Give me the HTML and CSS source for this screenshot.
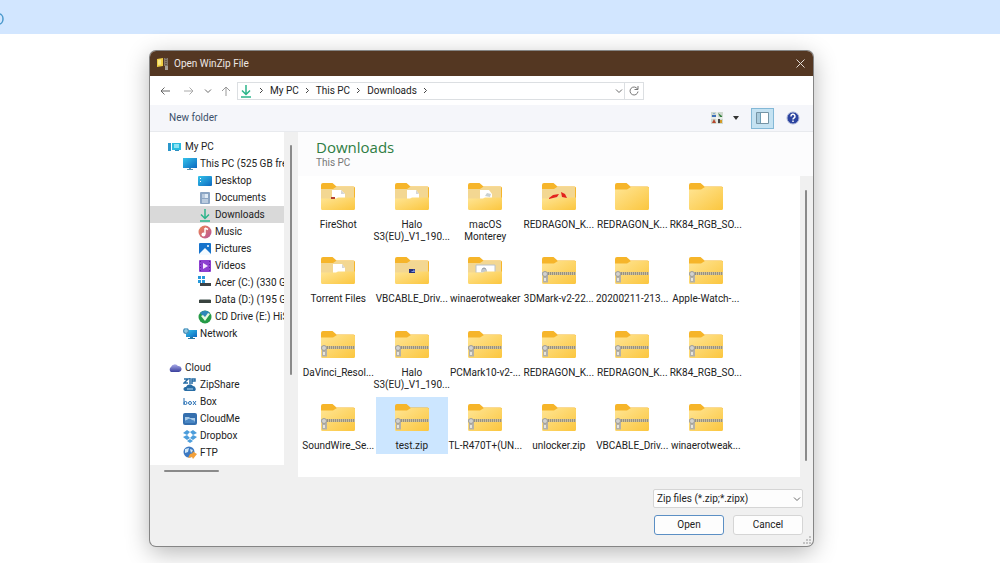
FILE: index.html
```html
<!DOCTYPE html>
<html lang="en">
<head>
    <meta charset="utf-8">
    <title>Open WinZip File</title>
    <link rel="stylesheet" href="styles.css">
</head>
<body>
    <!-- Shared icons -->
    <svg class="defs">
        <defs>
            <linearGradient id="gFront" x1="0" y1="0" x2="1" y2="1">
                <stop offset="0" stop-color="#ffe594"/>
                <stop offset="1" stop-color="#fbc63f"/>
            </linearGradient>
            <linearGradient id="gBlue" x1="0" y1="0" x2="1" y2="1">
                <stop offset="0" stop-color="#35c3ea"/>
                <stop offset="1" stop-color="#0b68c0"/>
            </linearGradient>
            <linearGradient id="gMusic" x1="0" y1="0" x2="1" y2="1">
                <stop offset="0" stop-color="#ee8650"/>
                <stop offset="1" stop-color="#b7539c"/>
            </linearGradient>
            <linearGradient id="gCloud" x1="0" y1="0" x2="0" y2="1">
                <stop offset="0" stop-color="#a9abe8"/>
                <stop offset="1" stop-color="#3a3f9c"/>
            </linearGradient>
        </defs>
        <symbol id="folder-back" viewBox="0 0 34 27">
            <path d="M0 2a2 2 0 0 1 2-2h9.500l4 3.500H32.500A1.500 1.500 0 0 1 34 5v12H0z" fill="#f6b52a"/>
            <path d="M0 6h12l3-2h18v14H0z" fill="#f3d792"/>
        </symbol>
        <symbol id="folder-front" viewBox="0 0 34 27">
            <path d="M0 15.500h15l2-1H34V25.500a1.500 1.500 0 0 1-1.500 1.500h-31A1.500 1.500 0 0 1 0 25.500z" fill="url(#gFront)"/>
        </symbol>
        <symbol id="folder" viewBox="0 0 34 27">
            <path d="M0 2a2 2 0 0 1 2-2h9.500l4 3.500H32.500A1.500 1.500 0 0 1 34 5v12H0z" fill="#f6b52a"/>
            <path d="M0 6.500h12l4-2.500h16.500A1.500 1.500 0 0 1 34 5.500v20a1.500 1.500 0 0 1-1.500 1.500h-31A1.500 1.500 0 0 1 0 25.500z" fill="url(#gFront)"/>
        </symbol>
        <symbol id="folder-doc" viewBox="0 0 34 27">
            <use href="#folder-back"/>
            <path d="M12 7h9l3 4v6H12z" fill="#fff"/>
            <path d="M21 7v4h3z" fill="#d6d6d6"/>
            <use href="#folder-front"/>
        </symbol>
        <symbol id="folder-fire" viewBox="0 0 34 27">
            <use href="#folder-back"/>
            <path d="M11 7h9l4 4v6H11z" fill="#fff"/>
            <path d="M20 7v4h4z" fill="#d6d6d6"/>
            <use href="#folder-front"/>
            <path d="M10 14h4v2h-4z" fill="#b5412f"/>
        </symbol>
        <symbol id="folder-mac" viewBox="0 0 34 27">
            <use href="#folder-back"/>
            <path d="M12 7h9l3 4v6H12z" fill="#fff"/>
            <path d="M17 13l2-3 4 1-1 3z" fill="#c9d1d2"/>
            <use href="#folder-front"/>
        </symbol>
        <symbol id="folder-cable" viewBox="0 0 34 27">
            <use href="#folder-back"/>
            <use href="#folder-front"/>
            <path d="M14 12h6v4h-6z" fill="#262f7c"/>
            <path d="M16 14h2l1-2 1 3h-3z" fill="#7c93dd"/>
        </symbol>
        <symbol id="folder-tweak" viewBox="0 0 34 27">
            <use href="#folder-back"/>
            <path d="M8 8h19v8H8z" fill="#fff" stroke="#b9c2cb"/>
            <path d="M14 15v-2a2 2 0 0 1 4 0v2M16 11v4" stroke="#8b949e" fill="none"/>
            <use href="#folder-front"/>
        </symbol>
        <symbol id="folder-red" viewBox="0 0 34 27">
            <use href="#folder-back"/>
            <use href="#folder-front"/>
            <path d="M7 15l4-3 6-1-2 3-4 1-4 1zM19 9l4 2 2 4-5-1z" fill="#e3231d"/>
        </symbol>
        <symbol id="zip" viewBox="0 0 34 27">
            <use href="#folder"/>
            <path d="M0 15h34v3H0z" fill="#cbbf9c"/>
            <path d="M6 16.500h28" stroke="#98917f" stroke-width="3" stroke-dasharray="1 1"/>
            <path d="M1 15h5v10.500H1z" fill="#b3b0a8"/>
            <circle cx="3" cy="17" r="2.500" fill="#d2d2d0" stroke="#a19e96"/>
            <path d="M3 21v3" stroke="#e7e5dd" stroke-width="2"/>
        </symbol>
        <symbol id="download" viewBox="0 0 14 14">
            <path d="M7 1v9M3 6.500l4 4 4-4M2 13h10" fill="none" stroke="#2bb58a" stroke-width="1.500"/>
        </symbol>
        <symbol id="chev-down" viewBox="0 0 8 8">
            <path d="M1 2.500l3 3 3-3" fill="none" stroke="#6b6b6b"/>
        </symbol>
    </svg>

    <div class="page-bar">
        <svg class="page-logo" viewBox="0 0 4 14"><path d="M-2 2h1a4 5 0 0 1 0 10h-1" fill="none" stroke="#4a98cb" stroke-width="1.500"/></svg>
    </div>

    <main class="desktop">
        <div class="dialog" role="dialog" aria-labelledby="dlgTitle">
            <header class="titlebar">
                <svg class="app-icon" viewBox="0 0 12 12">
                    <path d="M0 1l6-1v8l-6 1z" fill="#f0cf45"/>
                    <path d="M1 2l3-.5v5l-3 .5z" fill="#f9e788"/>
                    <path d="M7 0h4v8H7z" fill="#85786d"/>
                    <path d="M9 0v8" stroke="#403630" stroke-dasharray="1 1"/>
                    <path d="M8 8h3v4H8z" fill="#a5a09b"/>
                </svg>
                <h1 class="title" id="dlgTitle">Open WinZip File</h1>
                <button class="close" aria-label="Close">
                    <svg viewBox="0 0 9 9"><path d="M.5.5l8 8M8.500.5l-8 8" stroke="#e3dcd6"/></svg>
                </button>
            </header>

            <nav class="navbar">
                <button class="nav-btn back" aria-label="Back"><svg viewBox="0 0 10 10"><path d="M10 5H1M4.500 1.500L1 5l3.500 3.500" fill="none" stroke="#666"/></svg></button>
                <button class="nav-btn fwd" aria-label="Forward"><svg viewBox="0 0 10 10"><path d="M0 5h9M5.500 1.500L9 5 5.500 8.500" fill="none" stroke="#aaa"/></svg></button>
                <button class="nav-btn recent" aria-label="Recent locations"><svg viewBox="0 0 8 8"><use href="#chev-down"/></svg></button>
                <button class="nav-btn up" aria-label="Up"><svg viewBox="0 0 10 10"><path d="M5 10V1M1 5l4-4 4 4" fill="none" stroke="#999"/></svg></button>
                <div class="address">
                    <svg class="place"><use href="#download"/></svg>
                    <svg class="sep" viewBox="0 0 5 7"><path d="M1 1l2.500 2.500L1 6" fill="none" stroke="#444"/></svg>
                    <a href="#">My PC</a>
                    <svg class="sep" viewBox="0 0 5 7"><path d="M1 1l2.500 2.500L1 6" fill="none" stroke="#444"/></svg>
                    <a href="#">This PC</a>
                    <svg class="sep" viewBox="0 0 5 7"><path d="M1 1l2.500 2.500L1 6" fill="none" stroke="#444"/></svg>
                    <a href="#">Downloads</a>
                    <svg class="sep" viewBox="0 0 5 7"><path d="M1 1l2.500 2.500L1 6" fill="none" stroke="#444"/></svg>
                    <button class="drop" aria-label="Previous locations"><svg viewBox="0 0 8 8"><use href="#chev-down"/></svg></button>
                    <button class="refresh" aria-label="Refresh"><svg viewBox="0 0 10 10"><path d="M8.500 3A4 4 0 1 0 9 5.500M9 0v3.500H5.500" fill="none" stroke="#777"/></svg></button>
                </div>
            </nav>

            <div class="toolbar">
                <button class="new-folder">New folder</button>
                <button class="view" aria-label="Change your view">
                    <svg class="view-icon" viewBox="0 0 12 12">
                        <path d="M0 0h12v12H0z" fill="#cfd8cf"/>
                        <path d="M1 3h4v2H1z" fill="#3e6fb7"/><path d="M2 1h2v1H2z" fill="#8dafd0"/>
                        <path d="M7 1l4 3v1H9z" fill="#35803f"/><path d="M1 11l2-4 2 4z" fill="#b8462d"/>
                        <path d="M7 7h2v4H7z" fill="#434343"/><path d="M9 8h2v3H9z" fill="#d59b26"/>
                        <path d="M6 0v12M0 6h12" stroke="#fff"/>
                    </svg>
                    <svg class="caret" viewBox="0 0 6 4"><path d="M0 0h6L3 4z" fill="#333"/></svg>
                </button>
                <button class="pane" aria-label="Preview pane">
                    <svg viewBox="0 0 13 12"><path d="M.5.5h12v11H.5z" fill="#fff" stroke="#7594a5"/><path d="M1 1h3v10H1z" fill="#a9cbdc"/><path d="M4.500 1v10" stroke="#6c9db5"/></svg>
                </button>
                <button class="help" aria-label="Help">
                    <svg viewBox="0 0 14 14"><circle cx="7" cy="7" r="6" fill="#2b439f" stroke="#a7b2d6"/><path d="M5 5.500a2 2 0 1 1 3 1.500q-1 .5-1 1.500M7 9.500v1.500" fill="none" stroke="#fff" stroke-width="1.500"/></svg>
                </button>
            </div>

            <div class="body">
                <aside class="sidebar">
                    <div class="tree">
                        <a class="node" href="#"><svg viewBox="0 0 14 14"><path d="M0 3h3v8H0z" fill="#2a96cb"/><path d="M4 3h9v7H4z" fill="#29bce0"/><path d="M6 4h5v4H6z" fill="#8be2f2"/><path d="M7 10h4v1H7z" fill="#2c8ec0"/></svg>My PC</a>
                        <a class="node l1" href="#"><svg viewBox="0 0 14 14"><path d="M0 1h14v10H0z" fill="url(#gBlue)"/><path d="M6 11h2v1h2v1H4v-1h2z" fill="#5b8fae"/></svg>This PC (525 GB free)</a>
                        <a class="node l2" href="#"><svg viewBox="0 0 14 14"><rect y="2" width="14" height="10" rx="1" fill="url(#gBlue)"/><path d="M2 4h1v1H2zM2 7h1v1H2z" fill="#fff"/></svg>Desktop</a>
                        <a class="node l2" href="#"><svg viewBox="0 0 14 14"><rect x="2" y="1" width="10" height="12" rx="1" fill="#8ba5c4"/><path d="M4 4h3M4 6h3M4 9h6M4 11h6" stroke="#e8f0f8"/><path d="M7 3h3v4H7z" fill="#dfebf6"/></svg>Documents</a>
                        <a class="node l2 current" href="#"><svg><use href="#download"/></svg>Downloads</a>
                        <a class="node l2" href="#"><svg viewBox="0 0 14 14"><circle cx="7" cy="7" r="6.500" fill="url(#gMusic)"/><path d="M7 3v6M7 3l3 1.500" stroke="#fff" stroke-width="1.500"/><circle cx="5.500" cy="9.500" r="2" fill="#fff"/></svg>Music</a>
                        <a class="node l2" href="#"><svg viewBox="0 0 14 14"><rect x="1" y="1" width="12" height="12" rx="1" fill="#1673cc"/><path d="M1 12l6-6 6 6v1H1z" fill="#f4fbff"/><circle cx="10" cy="4" r="1" fill="#fff"/></svg>Pictures</a>
                        <a class="node l2" href="#"><svg viewBox="0 0 14 14"><rect x="1" y="1" width="12" height="12" rx="1" fill="#8d3fd0"/><path d="M2.500 2v10M11.500 2v10" stroke="#5c219b" stroke-dasharray="1 2"/><path d="M5 4l5 3-5 3z" fill="#f6e8ff"/></svg>Videos</a>
                        <a class="node l2" href="#"><svg viewBox="0 0 14 14"><path d="M0 0h3v3H0zM4 0h3v3H4zM0 4h3v3H0zM4 4h3v3H4z" fill="#2799da"/><path d="M2 7h11v3H2z" fill="#3d4245"/></svg>Acer (C:) (330 GB free)</a>
                        <a class="node l2" href="#"><svg viewBox="0 0 14 14"><path d="M2 6h10l1 1H1z" fill="#a1a9a7"/><path d="M1 7h12v3H1z" fill="#39433f"/></svg>Data (D:) (195 GB free)</a>
                        <a class="node l2" href="#"><svg viewBox="0 0 14 14"><circle cx="7" cy="7" r="6.500" fill="#259b46"/><path d="M2 3a6.500 6.500 0 0 1 10 0L7 8z" fill="#2f88b8"/><path d="M3 6l4 5 5-7-2-1-3 4-2-2z" fill="#e4f9df"/></svg>CD Drive (E:) HiSuite</a>
                        <a class="node l1" href="#"><svg viewBox="0 0 14 14"><path d="M3 3h11v7H3z" fill="url(#gBlue)"/><path d="M7 10h3v1h2v1H5v-1h2z" fill="#2778a3"/><circle cx="3" cy="4" r="3" fill="#4f93bd"/><path d="M1 4h4M3 1v5" stroke="#a7dced"/></svg>Network</a>
                        <a class="node root" href="#"><svg viewBox="0 0 14 14"><path d="M3 11a3 3 0 0 1 0-5 4 4 0 0 1 7-1 3 3 0 0 1 1 6z" fill="url(#gCloud)"/></svg>Cloud</a>
                        <a class="node l1" href="#"><svg viewBox="0 0 14 14"><path d="M1 1h4L1 5h4M7 0v6M9 6V1h3v2H9" fill="none" stroke="#286da5" stroke-width="1.500"/><path d="M2 13a2 2 0 0 1 1-4 4 4 0 0 1 7-1 3 3 0 0 1 2 5z" fill="#286da5"/><path d="M4 11h6" stroke="#b9dcf2"/></svg>ZipShare</a>
                        <a class="node l1" href="#"><svg viewBox="0 0 14 14"><path d="M1 3v7" stroke="#2870b5"/><circle cx="2.500" cy="8" r="1.500" fill="none" stroke="#2870b5"/><circle cx="7" cy="8" r="1.500" fill="none" stroke="#2870b5"/><path d="M10 6l3 4M13 6l-3 4" stroke="#2870b5"/></svg>Box</a>
                        <a class="node l1" href="#"><svg viewBox="0 0 14 14"><rect x="0" y="1" width="14" height="12" rx="2" fill="#356fae"/><path d="M2 10V5h4l1 1h5v4z" fill="#a9cbe8"/><path d="M2 11a2 2 0 0 1 2-3 3 3 0 0 1 5 0q3 0 3 3z" fill="#4a87c4"/></svg>CloudMe</a>
                        <a class="node l1" href="#"><svg viewBox="0 0 14 14"><path d="M4 1l3 2-3 3-4-2zM10 1l4 3-4 2-3-3zM0 8l4-2 3 3-3 2zM14 8l-4-2-3 3 3 2zM7 10l3 2-3 2-3-2z" fill="#4c9ddb"/></svg>Dropbox</a>
                        <a class="node l1" href="#"><svg viewBox="0 0 14 14"><circle cx="6" cy="6" r="5.500" fill="#3c79c2"/><path d="M2 3l4-1-1 4-3 1zM7 3l3 1-2 3z" fill="#d2e8f7"/><path d="M14 8l-4 5-1-2-4 1 2-4 3-1-1-2z" fill="#f3a03a"/></svg>FTP</a>
                    </div>
                    <div class="vbar"></div>
                    <div class="hbar"></div>
                </aside>

                <section class="content">
                    <div class="heading">
                        <h2>Downloads</h2>
                        <p>This PC</p>
                    </div>
                    <div class="files">
                        <button class="file"><svg><use href="#folder-fire"/></svg>FireShot</button>
                        <button class="file"><svg><use href="#folder-doc"/></svg>Halo<br>S3(EU)_V1_190...</button>
                        <button class="file"><svg><use href="#folder-mac"/></svg>macOS<br>Monterey</button>
                        <button class="file"><svg><use href="#folder-red"/></svg>REDRAGON_K...</button>
                        <button class="file"><svg><use href="#folder"/></svg>REDRAGON_K...</button>
                        <button class="file"><svg><use href="#folder"/></svg>RK84_RGB_SO...</button>

                        <button class="file"><svg><use href="#folder-doc"/></svg>Torrent Files</button>
                        <button class="file"><svg><use href="#folder-cable"/></svg>VBCABLE_Driv...</button>
                        <button class="file"><svg><use href="#folder-tweak"/></svg>winaerotweaker</button>
                        <button class="file"><svg><use href="#zip"/></svg>3DMark-v2-22...</button>
                        <button class="file"><svg><use href="#zip"/></svg>20200211-213...</button>
                        <button class="file"><svg><use href="#zip"/></svg>Apple-Watch-...</button>

                        <button class="file"><svg><use href="#zip"/></svg>DaVinci_Resol...</button>
                        <button class="file"><svg><use href="#zip"/></svg>Halo<br>S3(EU)_V1_190...</button>
                        <button class="file"><svg><use href="#zip"/></svg>PCMark10-v2-...</button>
                        <button class="file"><svg><use href="#zip"/></svg>REDRAGON_K...</button>
                        <button class="file"><svg><use href="#zip"/></svg>REDRAGON_K...</button>
                        <button class="file"><svg><use href="#zip"/></svg>RK84_RGB_SO...</button>

                        <button class="file"><svg><use href="#zip"/></svg>SoundWire_Se...</button>
                        <button class="file selected"><svg><use href="#zip"/></svg>test.zip</button>
                        <button class="file"><svg><use href="#zip"/></svg>TL-R470T+(UN...</button>
                        <button class="file"><svg><use href="#zip"/></svg>unlocker.zip</button>
                        <button class="file"><svg><use href="#zip"/></svg>VBCABLE_Driv...</button>
                        <button class="file"><svg><use href="#zip"/></svg>winaerotweak...</button>
                    </div>
                    <div class="scroll"><div class="thumb"></div></div>
                </section>
            </div>

            <footer class="footer">
                <div class="type">
                    <select aria-label="File type">
                        <option>Zip files (*.zip;*.zipx)</option>
                    </select>
                    <svg viewBox="0 0 8 8"><use href="#chev-down"/></svg>
                </div>
                <div class="actions">
                    <button class="btn primary">Open</button>
                    <button class="btn">Cancel</button>
                </div>
                <svg class="grip" viewBox="0 0 8 8"><path d="M6 0h2v2H6zM6 3h2v2H6zM3 3h2v2H3zM0 6h2v2H0zM3 6h2v2H3zM6 6h2v2H6z" fill="#c4c4c4"/></svg>
            </footer>
        </div>
    </main>
</body>
</html>
```

FILE: styles.css
```css
* { box-sizing: border-box; }
body {
    margin: 0;
    height: 100vh;
    display: flex;
    flex-direction: column;
    background: #fff;
    color: #222;
    font-family: Roboto, "Open Sans", sans-serif;
    font-size: 10px;
    line-height: 12px;
    overflow: hidden;
}
h1, h2, p { margin: 0; font-weight: normal; }
a { color: inherit; text-decoration: none; }
button, select { font: inherit; color: inherit; }
button {
    margin: 0;
    padding: 0;
    border: none;
    background: none;
    cursor: pointer;
}
svg { display: block; flex: none; }
.defs { position: absolute; width: 0; height: 0; }

.page-bar {
    flex: none;
    height: 34px;
    padding-top: 12px;
    background: #d2e6ff;
}
.page-logo { width: 4px; height: 14px; }

.desktop {
    flex: 1;
    min-height: 0;
    display: flex;
    padding: 17px 187px 17px 150px;
}
.dialog {
    flex: 1;
    min-width: 0;
    display: flex;
    flex-direction: column;
    background: #f0f0f0;
    border-radius: 6px;
    box-shadow: 0 0 0 1px #858585, 0 6px 24px rgba(0,0,0,0.3);
    overflow: hidden;
}

/* Title bar */
.titlebar {
    flex: none;
    height: 25px;
    display: flex;
    align-items: center;
    padding: 0 8px 0 7px;
    background: #543722;
    color: #efe9e5;
}
.app-icon { width: 12px; height: 12px; margin-right: 5px; }
.title { flex: 1; font-size: 10px; }
.close svg { width: 9px; height: 9px; }

/* Navigation */
.navbar {
    flex: none;
    height: 29px;
    display: flex;
    align-items: center;
    padding: 0 169px 0 10px;
    background: #fff;
}
.nav-btn svg { width: 10px; height: 10px; }
.nav-btn.fwd { margin-left: 14px; }
.nav-btn.recent { margin-left: 10px; }
.nav-btn.recent svg { width: 8px; height: 8px; }
.nav-btn.up { margin: 0 6px 0 9px; }
.address {
    flex: 1;
    height: 18px;
    display: flex;
    align-items: center;
    padding-left: 1px;
    border: 1px solid #dcdfe2;
}
.place { width: 14px; height: 14px; }
.sep { width: 5px; height: 7px; margin: 0 6px; }
.drop { margin-left: auto; padding: 0 1px; }
.drop svg { width: 8px; height: 8px; }
.refresh {
    align-self: stretch;
    padding: 0 4px;
    border-left: 1px solid #dcdfe2;
}
.refresh svg { width: 10px; height: 10px; }

/* Toolbar */
.toolbar {
    flex: none;
    height: 27px;
    display: flex;
    align-items: center;
    padding: 0 13px 0 19px;
    background: #f5f6fa;
    border-bottom: 1px solid #e8eaee;
}
.new-folder { color: #3b5069; }
.view { display: flex; align-items: center; gap: 10px; margin-left: auto; }
.view-icon { width: 12px; height: 12px; }
.caret { width: 6px; height: 4px; }
.pane {
    width: 23px;
    height: 21px;
    margin: 0 12px;
    padding: 0 4px;
    background: #c4e2f2;
    border: 1px solid #83b8d6;
}
.pane svg { width: 13px; height: 12px; }
.help svg { width: 14px; height: 14px; }

.body { flex: 1; min-height: 0; display: flex; }

/* Folder tree */
.sidebar {
    flex: none;
    width: 148px;
    display: grid;
    grid-template-columns: 134px 14px;
    grid-template-rows: 1fr 12px;
}
.tree { padding-top: 6px; background: #fff; overflow: hidden; }
.node {
    height: 17px;
    display: flex;
    align-items: center;
    gap: 3px;
    padding-left: 18px;
    white-space: nowrap;
}
.node svg { width: 14px; height: 14px; }
.node.l1 { padding-left: 33px; }
.node.l2 { padding-left: 48px; }
.node.root { margin-top: 17px; }
.node.current { background: #d9d9d9; }
.vbar {
    width: 2px;
    margin: 13px 0 90px 6px;
    background: #8a8a8a;
    border-radius: 1px;
}
.hbar {
    width: 55px;
    height: 2px;
    margin: 5px 0 0 14px;
    background: #8a8a8a;
    border-radius: 1px;
}

/* File list */
.content {
    flex: 1;
    min-width: 0;
    display: grid;
    grid-template-columns: minmax(0, 1fr) 13px;
    grid-template-rows: 44px 1fr;
}
.heading {
    grid-column: 1 / 3;
    padding: 6px 18px 0;
    background: #fcfcfd;
}
.heading h2 {
    font-family: "Open Sans", sans-serif;
    font-size: 15px;
    line-height: 18px;
    color: #2f7d43;
}
.heading p { line-height: 14px; color: #777; }
.files {
    display: grid;
    grid-template-columns: repeat(6, minmax(0, 1fr));
    grid-auto-rows: 1fr;
    gap: 1px;
    padding: 0 58px 7px 4px;
    background: #fff;
}
.file {
    align-self: start;
    display: flex;
    flex-direction: column;
    align-items: center;
    padding: 7px 0 2px;
    white-space: nowrap;
    text-align: center;
}
.file svg { width: 34px; height: 27px; margin-bottom: 9px; }
.file.selected { background: #cce6ff; }
.scroll { padding: 14px 0 16px 5px; }
.thumb {
    width: 2px;
    height: 100%;
    background: #8a8a8a;
    border-radius: 1px;
}

/* Footer */
.footer {
    position: relative;
    flex: none;
    display: flex;
    flex-direction: column;
    align-items: flex-end;
    gap: 7px;
    padding: 12px 10px 11px;
}
.type { position: relative; width: 150px; }
.type select {
    width: 100%;
    height: 19px;
    padding: 0 3px;
    appearance: none;
    background: #fdfdfd;
    border: 1px solid #d5d5d5;
    border-radius: 2px;
}
.type svg {
    position: absolute;
    top: 6px;
    right: 2px;
    width: 8px;
    height: 8px;
    pointer-events: none;
}
.actions { display: flex; gap: 9px; }
.btn {
    width: 70px;
    height: 20px;
    background: #fdfdfd;
    border: 1px solid #d5d5d5;
    border-radius: 3px;
}
.btn.primary { border-color: #5b8fc4; }
.grip { position: absolute; right: 2px; bottom: 2px; width: 8px; height: 8px; }
```
